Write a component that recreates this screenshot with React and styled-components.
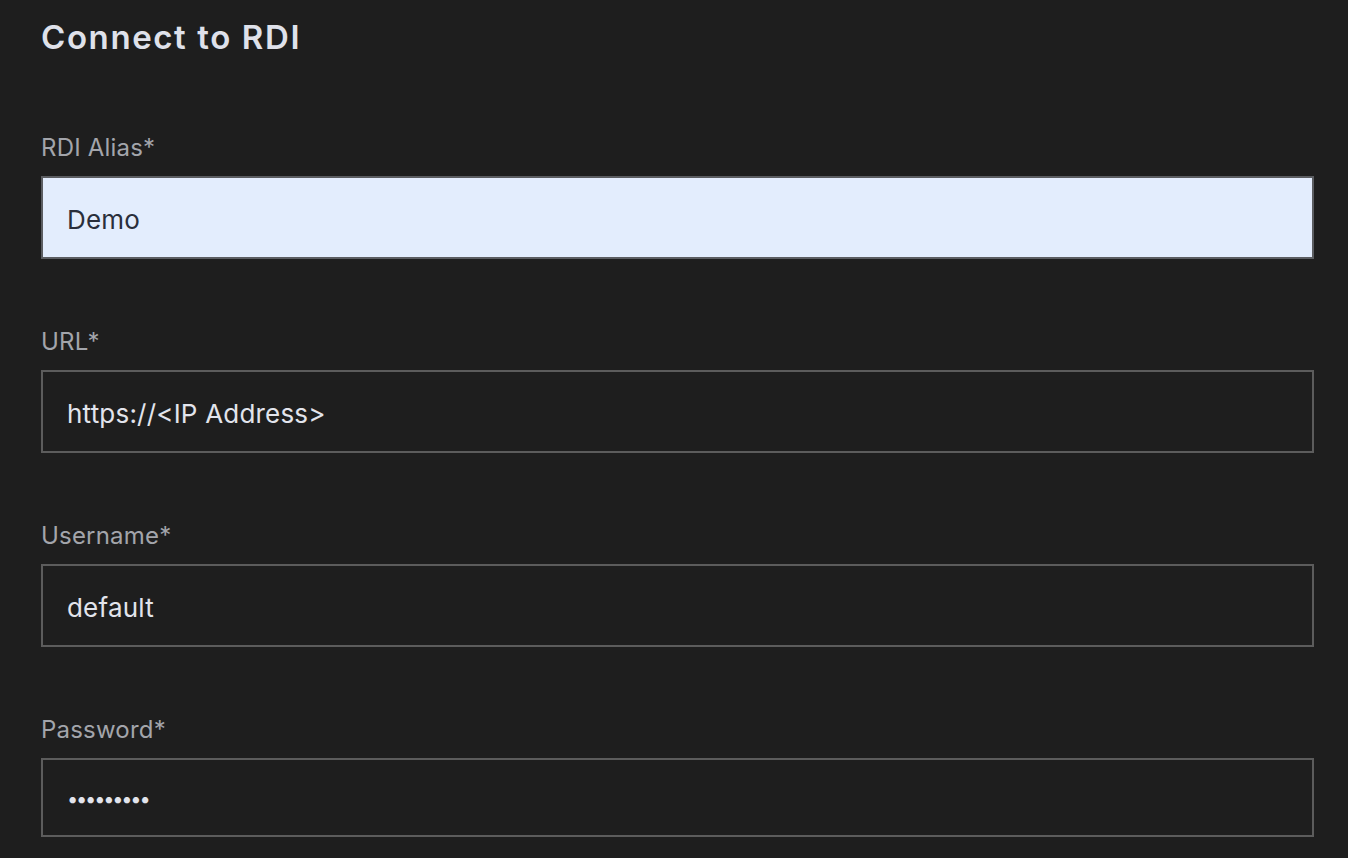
import React from 'react'
import styled, { createGlobalStyle } from 'styled-components'

const GlobalStyle = createGlobalStyle`
  html, body {
    margin: 0;
    padding: 0;
    background: #1e1e1e;
  }
  body {
    font-family: Inter, "Noto Sans", "Liberation Sans", sans-serif;
  }
`

const Page = styled.div`
  width: 1348px;
  height: 858px;
  box-sizing: border-box;
  padding: 13px 35px 0 41px;
  background: #1e1e1e;
  overflow: hidden;
`

const Title = styled.h1`
  margin: 0;
  font-size: 33px;
  line-height: 48px;
  font-weight: 600;
  color: #dfe1ea;
  letter-spacing: 1.6px;
`

const Form = styled.form`
  display: flex;
  flex-direction: column;
  gap: 68px;
  margin-top: 72px;
`

const Field = styled.div`
  display: flex;
  flex-direction: column;
`

const Label = styled.label`
  font-size: 24px;
  line-height: 30px;
  color: #a3a5ab;
  margin-bottom: 13px;
  letter-spacing: 0.2px;
`

const Input = styled.input`
  box-sizing: border-box;
  width: 1273px;
  height: ${p => (p.type === 'password' ? '79px' : '83px')};
  padding: 3px 24px 0;
  border: 2px solid ${p => (p.$filled ? '#5b5d61' : '#5c5c5c')};
  background: ${p => (p.$filled ? '#e3edfd' : '#1e1e1e')};
  color: ${p => (p.$filled ? '#2a2f3b' : '#e2e4ec')};
  font-family: inherit;
  font-size: ${p => (p.type === 'password' ? '20px' : '26px')};
  letter-spacing: ${p => (p.type === 'password' ? '-2.2px' : '0.2px')};
  outline: none;
  border-radius: 0;
`

const fields = [
  { label: 'RDI Alias*', value: 'Demo', filled: true },
  { label: 'URL*', value: 'https://<IP Address>' },
  { label: 'Username*', value: 'default' },
  { label: 'Password*', value: 'password1', type: 'password' },
]

export default function App() {
  return (
    <Page>
      <GlobalStyle />
      <Title>Connect to RDI</Title>
      <Form>
        {fields.map(f => (
          <Field key={f.label}>
            <Label>{f.label}</Label>
            <Input
              type={f.type || 'text'}
              defaultValue={f.value}
              $filled={f.filled}
              readOnly
            />
          </Field>
        ))}
      </Form>
    </Page>
  )
}
